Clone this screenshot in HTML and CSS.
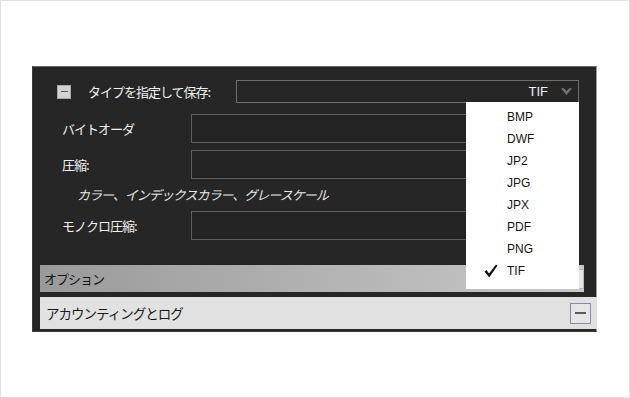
FILE: index.html
```html
<!DOCTYPE html>
<html lang="ja">
<head>
<meta charset="utf-8">
<link rel="stylesheet" href="styles.css">
</head>
<body>
<div class="frame">
  <div class="panel">
    <div class="row-type">
      <span class="chk"><span class="chk-minus"></span></span>
      <span class="lbl-type">タイプを指定して保存:</span>
      <div class="select">
        <span class="sel-val">TIF</span>
        <svg class="chev" width="11" height="7" viewBox="0 0 11 7"><path d="M0 0.5 L2.5 0 L5.5 3 L8.5 0 L11 0.5 L5.5 7 Z" fill="#6f6f6f"/></svg>
      </div>
    </div>
    <div class="field-row"><span class="flabel">バイトオーダ</span><div class="input"></div></div>
    <div class="field-row"><span class="flabel">圧縮:</span><div class="input"></div></div>
    <div class="note">カラー、インデックスカラー、グレースケール</div>
    <div class="field-row after-note"><span class="flabel">モノクロ圧縮:</span><div class="input"></div></div>
    <div class="bar options"><span class="bar-text">オプション</span><span class="plus-btn"></span></div>
    <div class="bar account"><span class="bar-text">アカウンティングとログ</span><span class="minus-btn"><span class="minus-line"></span></span></div>
    <ul class="menu">
      <li class="item">BMP</li>
      <li class="item">DWF</li>
      <li class="item">JP2</li>
      <li class="item">JPG</li>
      <li class="item">JPX</li>
      <li class="item">PDF</li>
      <li class="item">PNG</li>
      <li class="item checked"><svg class="check" width="14" height="14" viewBox="0 0 14 14"><path d="M0.5 7.5 L2.5 6 L5 9.5 L12 0.5 L13.5 1.5 L5.2 13.5 Z" fill="#111"/></svg>TIF</li>
    </ul>
  </div>
</div>
</body>
</html>
```
FILE: styles.css
```css
* { box-sizing: border-box; }
html, body { margin: 0; padding: 0; background: #fff; }
.frame {
  width: 630px;
  height: 398px;
  border: 1px solid #e2e2e2;
  background: #fff;
  padding: 65px 0 0 31px;
}
.panel {
  position: relative;
  width: 565px;
  height: 266px;
  background: #262626;
  border: 1px solid #3a3a3a;
  border-top-color: #6a6a6a;
  border-right-color: #9a9a9a;
  display: flex;
  flex-direction: column;
  padding-top: 13px;
  font-family: "Noto Sans CJK JP", "Noto Sans", sans-serif;
  color: #efefef;
  font-size: 13px;
}
.row-type {
  display: flex;
  align-items: center;
  height: 23px;
  padding-left: 24px;
}
.chk {
  width: 14px;
  height: 14px;
  background: #d2d2d2;
  border: 1px solid #a8a8a8;
  display: flex;
  align-items: center;
  justify-content: center;
}
.chk-minus { width: 7px; height: 1px; background: #5a5a5a; }
.lbl-type {
  margin-left: 17px;
  width: 148px;
  letter-spacing: -1px;
}
.select {
  width: 343px;
  height: 23px;
  border: 1px solid #6e6e6e;
  display: flex;
  align-items: center;
  justify-content: flex-end;
  padding-right: 6px;
}
.sel-val {
  font-family: "Liberation Sans", Arial, sans-serif;
  font-size: 13px;
  color: #f2f2f2;
  margin-right: 13px;
}
.chev { display: block; }
.field-row {
  display: flex;
  align-items: center;
  padding-left: 29px;
  height: 29px;
  margin-top: 11px;
}
.field-row + .field-row { margin-top: 7px; }
.field-row.after-note { margin-top: 0; }
.flabel { width: 129px; letter-spacing: -1px; }
.input {
  width: 388px;
  height: 29px;
  border: 1px solid #5e5e5e;
  background: #232323;
}
.note {
  height: 32px;
  line-height: 32px;
  padding-left: 44px;
  font-style: italic;
  letter-spacing: -1px;
  color: #e6e6e6;
}
.bar {
  display: flex;
  align-items: center;
  justify-content: space-between;
  margin-left: 7px;
  color: #151515;
  letter-spacing: -1px;
}
.options {
  margin-top: 25px;
  height: 27px;
  width: 544px;
  padding-left: 4px;
  background: linear-gradient(to right, #9a9a9a, #c9c9c9);
}
.plus-btn {
  width: 20px;
  height: 20px;
  background: #e4e4e4;
  border: 1px solid #b9b9b9;
}
.account {
  margin-top: 5px;
  height: 32px;
  width: 557px;
  padding-left: 6px;
  padding-right: 6px;
  background: #e1e1e1;
  font-size: 13.5px;
  color: #1a1a1a;
}
.minus-btn {
  width: 21px;
  height: 21px;
  border: 1px solid #8a8aa6;
  background: #e6e6e6;
  display: flex;
  align-items: center;
  justify-content: center;
}
.minus-line { width: 11px; height: 2px; background: #5a5a5a; }
.menu {
  position: absolute;
  left: 433px;
  top: 35px;
  width: 113px;
  height: 187px;
  margin: 0;
  padding: 4px 0 0 0;
  list-style: none;
  background: #fff;
  font-family: "Liberation Sans", Arial, sans-serif;
  font-size: 12px;
  color: #141414;
}
.item {
  position: relative;
  height: 22px;
  line-height: 22px;
  padding-left: 41px;
}
.check {
  position: absolute;
  left: 18px;
  top: 4px;
}
```
